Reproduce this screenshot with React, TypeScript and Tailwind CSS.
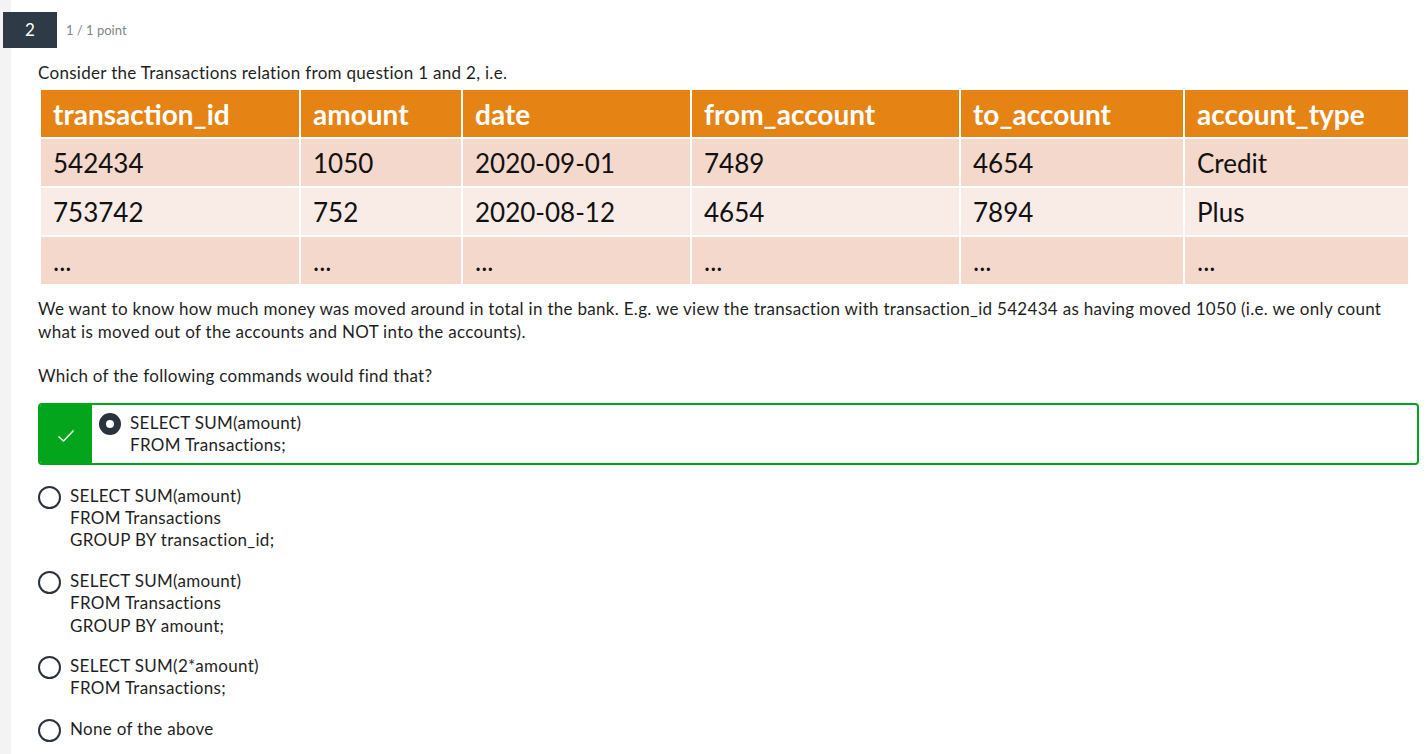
import React from "react";

const cols = [258, 160, 227, 267, 222, 223];
const header = ["transaction_id", "amount", "date", "from_account", "to_account", "account_type"];
const rows = [
  { bg: "bg-[#f5d8cc]", cells: ["542434", "1050", "2020-09-01", "7489", "4654", "Credit"] },
  { bg: "bg-[#f9ebe6]", cells: ["753742", "752", "2020-08-12", "4654", "7894", "Plus"] },
  { bg: "bg-[#f5d8cc]", cells: ["...", "...", "...", "...", "...", "..."] },
];

function Radio() {
  return <span className="mt-[1px] box-border h-[23px] w-[23px] shrink-0 rounded-full border-[2.5px] border-[#2a333d]" />;
}

function Option({ lines }: { lines: string[] }) {
  return (
    <div className="flex items-start gap-[9px]">
      <Radio />
      <div>
        {lines.map((l, i) => (
          <div key={i}>{l}</div>
        ))}
      </div>
    </div>
  );
}

export default function App() {
  return (
    <div
      className="relative min-h-[754px] w-[1426px] bg-white text-[17px] leading-[22.4px] text-[#1f1f1f]"
      style={{ fontFamily: "Lato, 'Open Sans', sans-serif" }}
    >
      <div className="absolute left-0 top-0 h-full w-[11px] bg-[#f3f3f3]" />
      <div className="relative flex items-center pl-[3px] pt-[12px]">
        <div className="flex h-[36px] w-[54px] items-center justify-center bg-[#2e3b46] text-[17px] text-white">2</div>
        <div className="ml-[9px] text-[13px] text-[#80868b]">1 / 1 point</div>
      </div>
      <div className="relative pl-[38px] pr-[7px] tracking-[0.3px]">
        <div className="mt-[14px] whitespace-nowrap">Consider the Transactions relation from question 1 and 2, i.e.</div>
        <div
          className="ml-[3px] mt-[6px] grid w-[1367px] gap-[2px] bg-white tracking-normal"
          style={{ gridTemplateColumns: cols.map((c) => c + "px").join(" ") }}
        >
          {header.map((h) => (
            <div key={h} className="flex h-[47px] items-center bg-[#e58315] pl-[12px] text-[28px] font-bold text-white">
              {h}
            </div>
          ))}
          {rows.map((r, ri) =>
            r.cells.map((c, ci) => (
              <div key={ri + "-" + ci} className={`flex h-[47px] items-center pl-[12px] text-[26px] text-[#111] ${r.bg}`}>
                {c}
              </div>
            ))
          )}
        </div>
        <div className="mt-[14px] whitespace-nowrap">
          <div>
            We want to know how much money was moved around in total in the bank. E.g. we view the transaction with transaction_id 542434 as having moved 1050 (i.e. we only count
          </div>
          <div>what is moved out of the accounts and NOT into the accounts).</div>
        </div>
        <div className="mt-[22px]">Which of the following commands would find that?</div>
        <div className="mt-[15px] flex h-[62px] overflow-hidden rounded-[4px] border-2 border-[#02a51c]">
          <div className="flex w-[52px] shrink-0 items-center justify-center bg-[#02a51c]">
            <svg width="18" height="14" viewBox="0 0 18 14" fill="none" className="mt-[4px]">
              <path d="M1.5 7.5 L6.5 12 L16.5 1.5" stroke="white" strokeWidth="1.5" />
            </svg>
          </div>
          <div className="flex items-start gap-[9px] pl-[7px] pt-[7px]">
            <span className="mt-[1px] box-border h-[22px] w-[22px] shrink-0 rounded-full border-[7px] border-[#2a333d] bg-white" />
            <div>
              <div>SELECT SUM(amount)</div>
              <div>FROM Transactions;</div>
            </div>
          </div>
        </div>
        <div className="mt-[20px] flex flex-col gap-[18px]">
          <Option lines={["SELECT SUM(amount)", "FROM Transactions", "GROUP BY transaction_id;"]} />
          <Option lines={["SELECT SUM(amount)", "FROM Transactions", "GROUP BY amount;"]} />
          <Option lines={["SELECT SUM(2*amount)", "FROM Transactions;"]} />
          <Option lines={["None of the above"]} />
        </div>
      </div>
    </div>
  );
}
